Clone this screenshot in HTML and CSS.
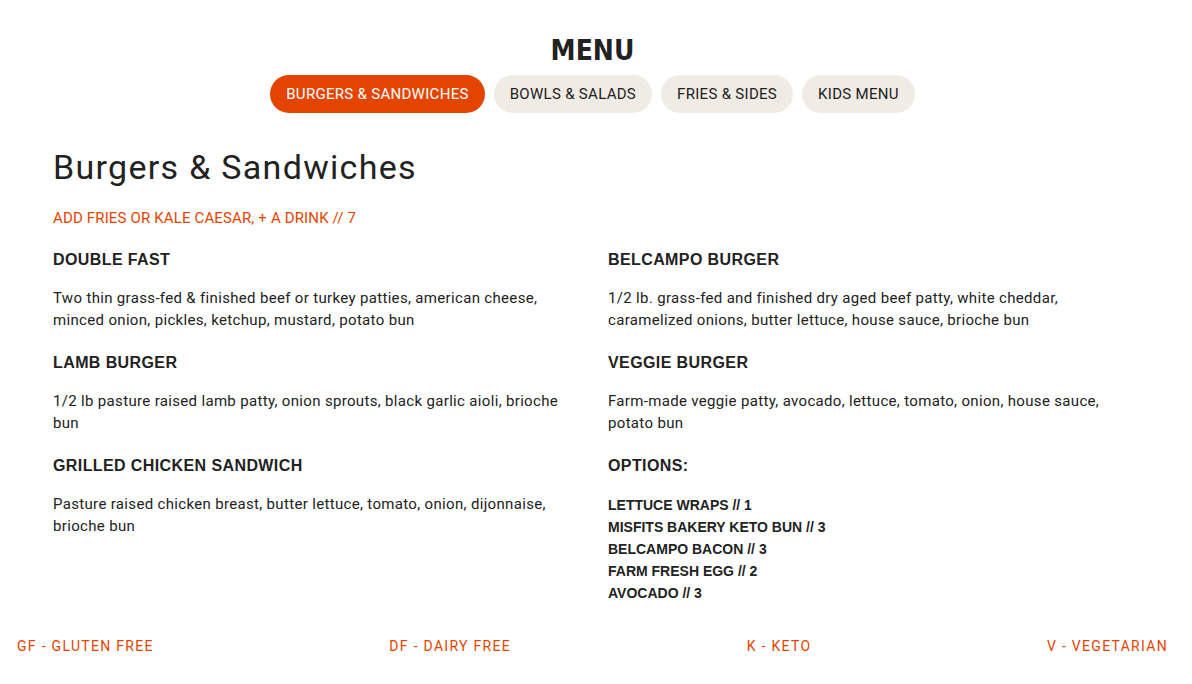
FILE: index.html
```html
<!DOCTYPE html>
<html lang="en">
<head>
<meta charset="utf-8">
<title>Menu</title>
<link rel="stylesheet" href="styles.css">
</head>
<body>
<header class="menu-header">
  <h1 class="menu-title">MENU</h1>
  <nav class="tabs">
    <a class="tab tab-active">BURGERS &amp; SANDWICHES</a>
    <a class="tab">BOWLS &amp; SALADS</a>
    <a class="tab">FRIES &amp; SIDES</a>
    <a class="tab">KIDS MENU</a>
  </nav>
</header>
<main class="section">
  <h2 class="section-title">Burgers &amp; Sandwiches</h2>
  <p class="section-note">ADD FRIES OR KALE CAESAR, + A DRINK // 7</p>
  <div class="items">
    <div class="item">
      <h3 class="item-name">DOUBLE FAST</h3>
      <p class="item-desc">Two thin grass-fed &amp; finished beef or turkey patties, american cheese, minced onion, pickles, ketchup, mustard, potato bun</p>
    </div>
    <div class="item">
      <h3 class="item-name">BELCAMPO BURGER</h3>
      <p class="item-desc">1/2 lb. grass-fed and finished dry aged beef patty, white cheddar, caramelized onions, butter lettuce, house sauce, brioche bun</p>
    </div>
    <div class="item">
      <h3 class="item-name">LAMB BURGER</h3>
      <p class="item-desc">1/2 lb pasture raised lamb patty, onion sprouts, black garlic aioli, brioche bun</p>
    </div>
    <div class="item">
      <h3 class="item-name">VEGGIE BURGER</h3>
      <p class="item-desc">Farm-made veggie patty, avocado, lettuce, tomato, onion, house sauce, potato bun</p>
    </div>
    <div class="item">
      <h3 class="item-name">GRILLED CHICKEN SANDWICH</h3>
      <p class="item-desc">Pasture raised chicken breast, butter lettuce, tomato, onion, dijonnaise, brioche bun</p>
    </div>
    <div class="item">
      <h3 class="item-name">OPTIONS:</h3>
      <ul class="options">
        <li>LETTUCE WRAPS // 1</li>
        <li>MISFITS BAKERY KETO BUN // 3</li>
        <li>BELCAMPO BACON // 3</li>
        <li>FARM FRESH EGG // 2</li>
        <li>AVOCADO // 3</li>
      </ul>
    </div>
  </div>
</main>
<footer class="legend">
  <span>GF - GLUTEN FREE</span>
  <span>DF - DAIRY FREE</span>
  <span>K - KETO</span>
  <span>V - VEGETARIAN</span>
</footer>
</body>
</html>
```

FILE: styles.css
```css
* { box-sizing: border-box; }
html, body { margin: 0; padding: 0; background: #fff; }
body {
  font-family: Roboto, "Liberation Sans", sans-serif;
  color: #222;
  padding-right: 7px;
}
.menu-header {
  display: flex;
  flex-direction: column;
  align-items: center;
  padding-top: 34px;
}
.menu-title {
  margin: 0;
  font-family: "DejaVu Sans Condensed", "DejaVu Sans", sans-serif;
  font-stretch: condensed;
  font-weight: 700;
  font-size: 28px;
  line-height: 34px;
  color: #222;
  letter-spacing: 0;
}
.tabs {
  display: flex;
  gap: 9px;
  margin-top: 7px;
}
.tab {
  display: flex;
  align-items: center;
  height: 38px;
  padding: 0 16px;
  border-radius: 19px;
  background: #f0ebe5;
  color: #222;
  font-size: 15px;
  font-family: Roboto, sans-serif;
  letter-spacing: 0.3px;
}
.tab-active {
  background: #e34500;
  color: #fff;
}
.section {
  padding: 34px 53px 0;
}
.section-title {
  margin: 0;
  font-family: Roboto, sans-serif;
  font-weight: 400;
  font-size: 34px;
  line-height: 40px;
  letter-spacing: 1.3px;
  color: #222;
}
.section-note {
  margin: 22px 0 0;
  color: #e34500;
  font-size: 15px;
  line-height: 18px;
  letter-spacing: 0.15px;
}
.items {
  display: grid;
  grid-template-columns: 525px 525px;
  column-gap: 30px;
  margin-top: 19px;
}
.item { padding-bottom: 18px; }
.item-name {
  margin: 0;
  font-family: "Liberation Sans", Arial, sans-serif;
  font-weight: 700;
  font-size: 16px;
  line-height: 28px;
  letter-spacing: 0.4px;
  color: #222;
}
.item-desc {
  margin: 13px 0 0;
  font-size: 15px;
  line-height: 22px;
  letter-spacing: 0.33px;
  color: #222;
}
.options {
  list-style: none;
  margin: 14px 0 0;
  padding: 0;
  font-family: "Liberation Sans", Arial, sans-serif;
  font-weight: 700;
  font-size: 14px;
  line-height: 22px;
}
.legend {
  display: flex;
  justify-content: space-between;
  padding: 15px 17px 0 17px;
  color: #e34500;
  font-size: 14px;
  line-height: 18px;
  letter-spacing: 1.3px;
}
```
